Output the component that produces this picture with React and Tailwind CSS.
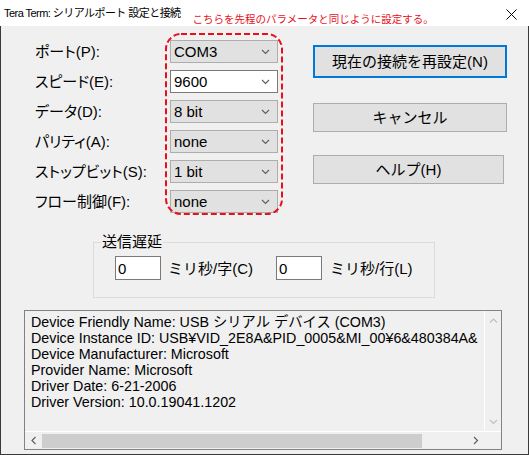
const font = { fontFamily: '"Liberation Sans", "Noto Sans CJK JP", sans-serif' };

const rows = [
  { label: 'ポート(P):', value: 'COM3' },
  { label: 'スピード(E):', value: '9600', edit: true },
  { label: 'データ(D):', value: '8 bit' },
  { label: 'パリティ(A):', value: 'none' },
  { label: 'ストップビット(S):', value: '1 bit' },
  { label: 'フロー制御(F):', value: 'none' },
];

const info = [
  'Device Friendly Name: USB シリアル デバイス (COM3)',
  'Device Instance ID: USB¥VID_2E8A&PID_0005&MI_00¥6&480384A&',
  'Device Manufacturer: Microsoft',
  'Provider Name: Microsoft',
  'Driver Date: 6-21-2006',
  'Driver Version: 10.0.19041.1202',
];

const Chevron = ({ dir = 'down', color = '#606060' }) => {
  const d = {
    down: 'M1 1 L4.5 4.5 L8 1',
    up: 'M1 4.5 L4.5 1 L8 4.5',
    left: 'M4.5 1 L1 4.5 L4.5 8',
    right: 'M1 1 L4.5 4.5 L1 8',
  }[dir];
  const w = dir === 'left' || dir === 'right' ? 6 : 9;
  const h = dir === 'left' || dir === 'right' ? 9 : 6;
  return (
    <svg width={w} height={h} viewBox={`0 0 ${w} ${h}`}>
      <path d={d} fill="none" stroke={color} strokeWidth="1.2" />
    </svg>
  );
};

const Combo = ({ value, edit }) => (
  <div className={`h-[23px] w-[108px] flex items-center justify-between pl-[3px] pr-[7px] border ${edit ? 'bg-white border-[#7a7a7a]' : 'bg-[#e1e1e1] border-[#adadad]'}`}>
    <span className="text-[15px] leading-none text-black">{value}</span>
    <Chevron />
  </div>
);

const Button = ({ children, primary, w = 'w-[194px]', h = 'h-[29px]' }) => (
  <div className={`${w} ${h} flex items-center justify-center bg-[#e1e1e1] text-[15px] leading-none text-black ${primary ? 'border-2 border-[#0078d7]' : 'border border-[#adadad]'}`}>
    {children}
  </div>
);

export default function App() {
  return (
    <div style={font} className="relative w-[529px] h-[455px] bg-[#f0f0f0] overflow-hidden flex flex-col">
      {/* title bar */}
      <div className="h-[26px] bg-white flex items-start shrink-0 relative">
        <span className="ml-[4px] mt-[6px] text-[11px] tracking-[-0.55px] leading-[14px] text-black">Tera Term: シリアルポート 設定と接続</span>
        <span className="ml-[12px] mt-[13px] text-[10.5px] leading-[13px] text-[#e8101a]">こちらを先程のパラメータと同じように設定する。</span>
        <svg className="ml-auto mr-[12px] mt-[9px]" width="11" height="11" viewBox="0 0 11 11">
          <path d="M0.5 0.5 L10.5 10.5 M10.5 0.5 L0.5 10.5" stroke="#000" strokeWidth="1" />
        </svg>
      </div>

      <div className="flex-1 flex flex-col border-l border-r border-b border-[#3a3a3a]">
        {/* top section */}
        <div className="flex pt-[14px]">
          <div className="flex flex-col gap-[7px] pl-[34px]">
            {rows.map(r => (
              <div key={r.label} className="flex items-center h-[23px]">
                <span className="w-[135px] text-[15px] leading-none text-black [font-feature-settings:'palt']">{r.label}</span>
                <Combo value={r.value} edit={r.edit} />
              </div>
            ))}
          </div>
          <div className="flex flex-col ml-[35px] mt-[5px]">
            <Button primary h="h-[33px]">現在の接続を再設定(N)</Button>
            <div className="mt-[25px]"><Button>キャンセル</Button></div>
            <div className="mt-[23px]"><Button w="w-[191px]">ヘルプ(H)</Button></div>
          </div>
        </div>

        {/* 送信遅延 */}
        <fieldset className="ml-[92px] mt-[21px] w-[342px] border border-[#dcdcdc] pl-[7px] pt-[6px] pb-[17px]">
          <legend className="px-[1px] text-[15px] leading-[16px] text-black">送信遅延</legend>
          <div className="flex items-center pl-[14px]">
            <div className="w-[46px] h-[24px] bg-white border border-[#7a7a7a] flex items-center pl-[2px] text-[15px] leading-none">0</div>
            <span className="ml-[7px] w-[108px] text-[15px] leading-none">ミリ秒/字(C)</span>
            <div className="w-[46px] h-[24px] bg-white border border-[#7a7a7a] flex items-center pl-[2px] text-[15px] leading-none">0</div>
            <span className="ml-[8px] text-[15px] leading-none">ミリ秒/行(L)</span>
          </div>
        </fieldset>

        {/* device info */}
        <div className="ml-[23px] mt-[12px] w-[478px] h-[140px] border border-[#828282] flex flex-col">
          <div className="flex-1 flex min-h-0">
            <div className="flex-1 overflow-hidden pl-[6px] pt-[3px]">
              {info.map(l => (
                <div key={l} className="text-[14.3px] leading-[16px] whitespace-nowrap text-black">{l}</div>
              ))}
            </div>
            <div className="w-[17px] border-l border-white flex flex-col items-center justify-between pt-[7px] pb-[6px]">
              <Chevron dir="up" color="#c0c0c0" />
              <Chevron dir="down" color="#c0c0c0" />
            </div>
          </div>
          <div className="h-[18px] flex border-t border-white">
            <div className="flex-1 flex items-center">
              <div className="w-[17px] flex justify-center"><Chevron dir="left" /></div>
              <div className="w-[380px] h-[14px] bg-[#cdcdcd]" />
              <div className="ml-auto w-[17px] flex justify-center"><Chevron dir="right" /></div>
            </div>
            <div className="w-[17px]" />
          </div>
        </div>
      </div>

      {/* red annotation outline */}
      <svg className="absolute left-[165px] top-[33px]" width="118" height="182" viewBox="0 0 118 182">
        <rect x="1" y="1" width="116" height="180" rx="15" fill="none" stroke="#e8101a" strokeWidth="2" strokeDasharray="6 3" />
      </svg>
    </div>
  );
}
